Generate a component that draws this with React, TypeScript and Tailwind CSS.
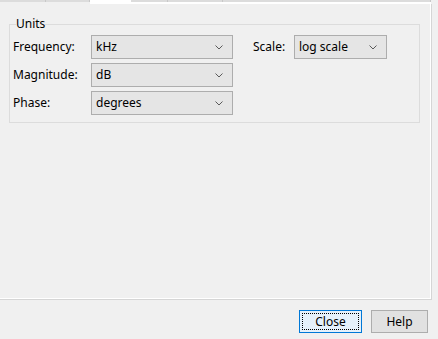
import React from 'react';

type ComboProps = { value: string; width: string };

function Chevron() {
  return (
    <svg width="8" height="5" viewBox="0 0 8 5" className="shrink-0">
      <path d="M0.5 0.5 L4 4 L7.5 0.5" fill="none" stroke="#5a5a5a" strokeWidth="1" />
    </svg>
  );
}

function Combo({ value, width }: ComboProps) {
  return (
    <div className={`${width} h-[24px] flex items-center justify-between border border-[#adadad] bg-[#e5e5e5] pl-[4px] pr-[9px]`}>
      <span className="leading-none">{value}</span>
      <Chevron />
    </div>
  );
}

const tabs = [
  { w: 'w-[46px]', selected: false },
  { w: 'w-[44px]', selected: false },
  { w: 'w-[41px]', selected: true },
  { w: 'w-[37px]', selected: false },
  { w: 'w-[55px]', selected: false },
  { w: 'w-[208px]', selected: false },
];

export default function App() {
  return (
    <div
      className="w-[438px] h-[339px] bg-[#f0f0f0] text-[12px] text-black flex flex-col overflow-hidden"
      style={{ fontFamily: '"Noto Sans", "Liberation Sans", sans-serif' }}
    >
      {/* tab strip: only the lower edge of the tabs is visible */}
      <div className="flex h-[4px] shrink-0">
        {tabs.map((t, i) =>
          t.selected ? (
            <div key={i} className={`${t.w} h-[4px] bg-white`} />
          ) : (
            <div key={i} className={`${t.w} h-[4px] flex flex-col`}>
              <div className="h-[2px] bg-[#dcdcdc] border-r border-[#c8c8c8]" />
              <div className={`h-[2px] ${i > 2 ? 'bg-white' : 'bg-[#f0f0f0]'}`} />
            </div>
          )
        )}
      </div>

      {/* tab page */}
      <div className="w-[432px] h-[296px] shrink-0 border-r border-b border-[#d5d5d5] shadow-[inset_-1px_-1px_0_#ffffff] pl-[9px] pt-[12px]">
        <fieldset className="w-[411px] h-[107px] border border-[#dcdcdc] pl-[3px] pt-[3px]">
          <legend className="ml-[3px] px-0 leading-[16px]">Units</legend>
          <div className="flex items-start">
            <div className="flex flex-col gap-[4px]">
              <div className="flex items-center">
                <span className="w-[78px]">Frequency:</span>
                <Combo value="kHz" width="w-[142px]" />
              </div>
              <div className="flex items-center">
                <span className="w-[78px]">Magnitude:</span>
                <Combo value="dB" width="w-[142px]" />
              </div>
              <div className="flex items-center">
                <span className="w-[78px]">Phase:</span>
                <Combo value="degrees" width="w-[142px]" />
              </div>
            </div>
            <div className="flex items-center ml-[20px]">
              <span className="w-[41px]">Scale:</span>
              <Combo value="log scale" width="w-[93px]" />
            </div>
          </div>
        </fieldset>
      </div>

      {/* dialog buttons */}
      <div className="flex justify-end gap-[9px] pr-[10px] mt-[10px]">
        <button className="w-[63px] h-[23px] border border-[#0078d7] bg-[#e5f1fb] p-[2px]">
          <span className="flex h-full items-center justify-center border border-dotted border-black leading-none">
            Close
          </span>
        </button>
        <button className="w-[57px] h-[23px] border border-[#adadad] bg-[#e1e1e1] flex items-center justify-center leading-none">
          Help
        </button>
      </div>
    </div>
  );
}
